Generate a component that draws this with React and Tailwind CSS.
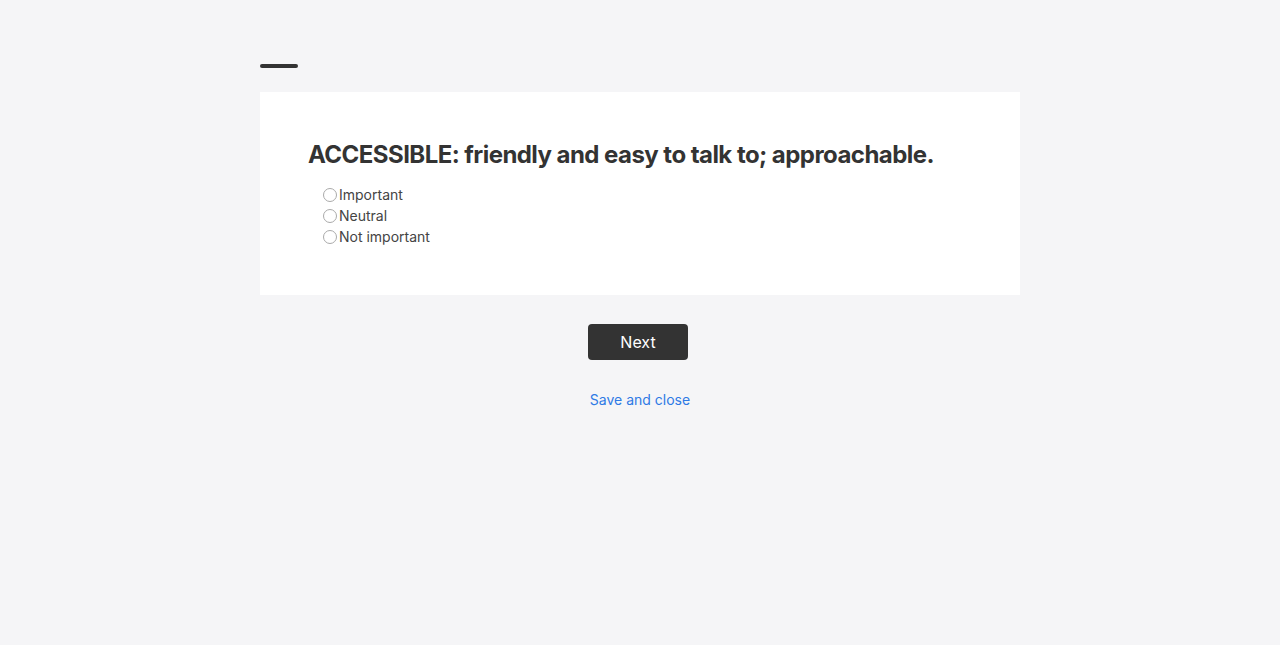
import { useState } from 'react'

const options = ['Important', 'Neutral', 'Not important']

export default function App() {
  const [choice, setChoice] = useState(null)

  return (
    <div className="min-h-[645px] bg-[#f5f5f7] font-['Inter','Liberation_Sans',sans-serif] text-[#333]">
      <div className="w-[760px] mx-auto pt-[64px]">
        {/* ── Progress bar ── */}
        <div className="w-[38px] h-[4px] rounded-full bg-[#333]" />

        {/* ── Question card ── */}
        <div className="mt-[24px] bg-white px-[48px] pt-[47px] pb-[48px]">
          <h1 className="text-[24px] leading-[32px] font-bold tracking-[-0.55px]">
            ACCESSIBLE: friendly and easy to talk to; approachable.
          </h1>
          <div className="mt-[13px] pl-[15px] flex flex-col">
            {options.map((opt) => (
              <label key={opt} className="flex items-center h-[21px] text-[14px] text-[#444] cursor-pointer">
                <input
                  type="radio"
                  name="q"
                  checked={choice === opt}
                  onChange={() => setChoice(opt)}
                  className="appearance-none w-[14px] h-[14px] rounded-full border border-[#aaa] bg-white m-0 checked:border-[4px] checked:border-[#333]"
                />
                <span className="ml-[2px]">{opt}</span>
              </label>
            ))}
          </div>
        </div>

        {/* ── Actions ── */}
        <div className="flex flex-col items-center mt-[29px]">
          <button className="w-[100px] h-[36px] mr-[4px] rounded bg-[#333] text-white text-[16px]">Next</button>
          <a href="#" className="mt-[29px] text-[14px] text-[#2f7ae5]">Save and close</a>
        </div>
      </div>
    </div>
  )
}
